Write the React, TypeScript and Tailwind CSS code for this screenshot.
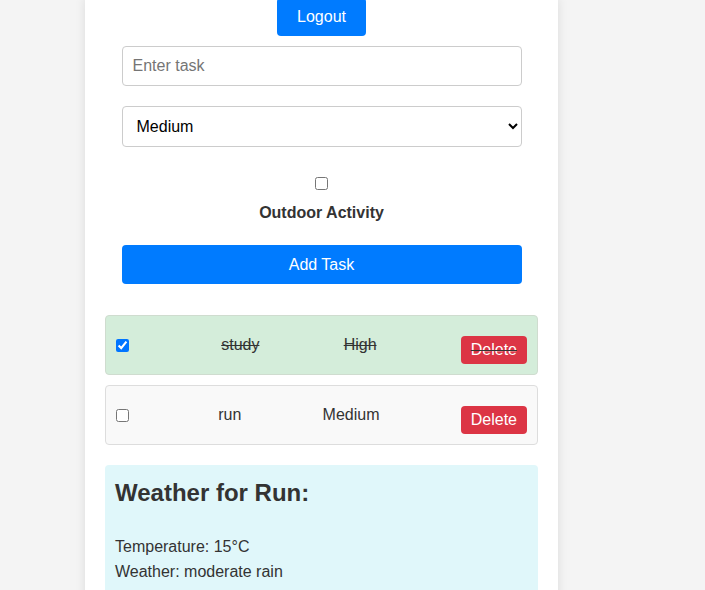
import { useState } from "react";

interface Task {
  id: number;
  text: string;
  priority: string;
  done: boolean;
}

export default function App() {
  const [tasks, setTasks] = useState<Task[]>([
    { id: 1, text: "study", priority: "High", done: true },
    { id: 2, text: "run", priority: "Medium", done: false },
  ]);
  const [newTask, setNewTask] = useState("");
  const [priority, setPriority] = useState("Medium");
  const [outdoor, setOutdoor] = useState(false);

  const toggle = (id: number) =>
    setTasks(tasks.map((t) => (t.id === id ? { ...t, done: !t.done } : t)));

  const remove = (id: number) => setTasks(tasks.filter((t) => t.id !== id));

  const addTask = () => {
    if (!newTask.trim()) return;
    setTasks([...tasks, { id: Date.now(), text: newTask, priority, done: false }]);
    setNewTask("");
  };

  return (
    <div className="min-h-screen overflow-hidden bg-[#f4f4f4] font-['Liberation_Sans',Arial,sans-serif] text-[16px] text-[#333]">
      <div className="ml-[85px] -mt-[2px] w-[473px] bg-white px-5 pb-5 shadow-[0_0_10px_rgba(0,0,0,0.1)]">
        <div className="flex justify-center">
          <button className="h-[38px] rounded-[4px] bg-[#007bff] px-5 leading-[18px] text-white">
            Logout
          </button>
        </div>

        <input
          value={newTask}
          onChange={(e) => setNewTask(e.target.value)}
          placeholder="Enter task"
          className="mx-auto mt-[10px] block h-[40px] w-[400px] rounded-[4px] border border-[#ccc] px-[10px] text-[16px] text-black outline-none placeholder:text-[#757575]"
        />

        <select
          value={priority}
          onChange={(e) => setPriority(e.target.value)}
          className="mx-auto mt-[20px] block h-[41px] w-[400px] rounded-[4px] border border-[#ccc] bg-white px-[10px] text-[16px] text-black"
        >
          <option>Low</option>
          <option>Medium</option>
          <option>High</option>
        </select>

        <input
          type="checkbox"
          checked={outdoor}
          onChange={() => setOutdoor(!outdoor)}
          className="mx-auto mt-[30px] block h-[13px] w-[13px]"
        />
        <div className="mt-[13px] text-center leading-[20px] font-bold">Outdoor Activity</div>

        <button
          onClick={addTask}
          className="mx-auto mt-[22px] block h-[39px] w-[400px] rounded-[4px] bg-[#007bff] text-[16px] text-white"
        >
          Add Task
        </button>

        <div className="mt-[31px] flex flex-col gap-[10px]">
          {tasks.map((task) => (
            <div
              key={task.id}
              className={`flex h-[60px] items-center justify-between rounded-[4px] border px-[10px] ${
                task.done
                  ? "border-[#cfdccf] bg-[#d4edda] line-through"
                  : "border-[#ddd] bg-[#f9f9f9]"
              }`}
            >
              <input
                type="checkbox"
                checked={task.done}
                onChange={() => toggle(task.id)}
                className="m-0 mr-2 h-[13px] w-[13px]"
              />
              <span>{task.text}</span>
              <span>{task.priority}</span>
              <button
                onClick={() => remove(task.id)}
                className="mt-[10px] h-[28px] rounded-[4px] bg-[#dc3545] px-[10px] text-white"
              >
                Delete
              </button>
            </div>
          ))}
        </div>

        <div className="mt-[20px] rounded-[4px] bg-[#e0f7fa] px-[10px] pt-[14px] pb-[20px]">
          <h2 className="text-[24px] leading-[28px] font-bold">Weather for Run:</h2>
          <p className="mt-[27px] leading-[25px]">Temperature: 15°C</p>
          <p className="leading-[25px]">Weather: moderate rain</p>
        </div>
      </div>
    </div>
  );
}
